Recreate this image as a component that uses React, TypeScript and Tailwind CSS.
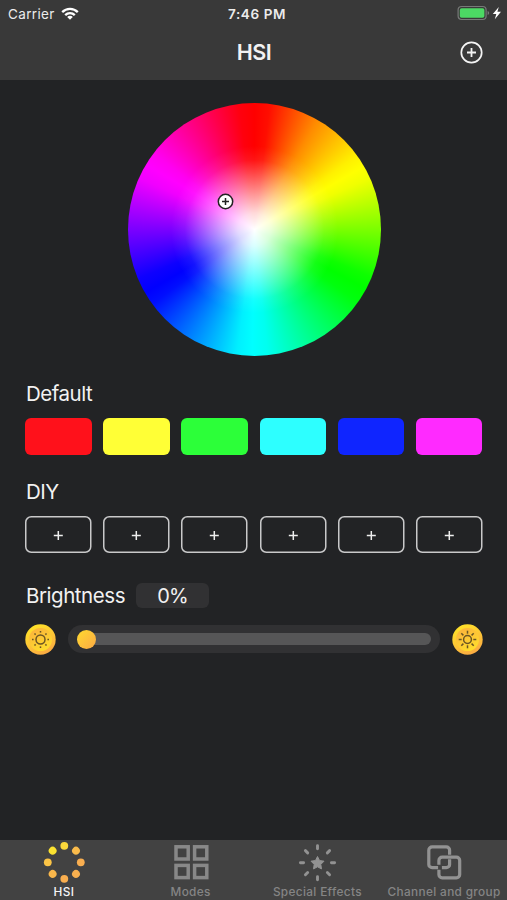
import type { ReactNode } from 'react';

const presets = ['bg-[#ff111b]', 'bg-[#ffff36]', 'bg-[#2cff39]', 'bg-[#2dffff]', 'bg-[#0f25ff]', 'bg-[#ff2aff]'];

function StatusBar() {
  return (
    <div className="grid h-[28px] grid-cols-3 items-center pl-2 pr-[5px] text-[13.5px] text-[#ececec]">
      <div className="flex items-center gap-[7px]">
        <span className="tracking-[0.35px]">Carrier</span>
        <svg className="mb-[2px] -ml-px" width="18" height="13" viewBox="0 0 18 13" fill="none" stroke="#fff" strokeWidth="2.3">
          <path d="M1.2 5.1C5.6.7 12.4.7 16.8 5.1" />
          <path d="M4.2 8.1c2.7-2.7 6.9-2.7 9.6 0" />
          <path d="M9 12.7 6.2 9.9c1.6-1.5 4-1.5 5.6 0z" fill="#fff" stroke="none" />
        </svg>
      </div>
      <span className="pl-[4px] text-center text-[13.5px] font-semibold tracking-[0.6px] whitespace-nowrap">7:46 PM</span>
      <div className="flex items-center justify-end pb-[2px]">
        <svg width="45" height="16" viewBox="0 0 45 16">
          <rect x="1.1" y="1.5" width="28" height="13" rx="3.5" fill="none" stroke="#777a78" strokeWidth="1.2" />
          <rect x="2.8" y="3.2" width="24.6" height="9.6" rx="1.8" fill="#4cd964" />
          <path d="M30.6 6v4q1.6-.6 1.6-2t-1.6-2z" fill="#777a78" />
          <path d="M41.8 2 35.8 9h3.5l-1.5 5.2 6.2-7.4h-3.6z" fill="#fff" />
        </svg>
      </div>
    </div>
  );
}

function Header() {
  return (
    <header className="h-[79.5px] shrink-0 bg-[#393939]">
      <StatusBar />
      <div className="grid h-[48px] grid-cols-3 items-center px-[23.5px]">
        <span />
        <h1 className="pl-[1px] text-center text-[21.5px] font-semibold tracking-[-0.5px]">HSI</h1>
        <svg className="justify-self-end" width="23" height="23" viewBox="0 0 23 23" fill="none" stroke="#f4f4f4">
          <circle cx="11.5" cy="11.5" r="10.2" strokeWidth="1.7" />
          <path d="M11.5 7v9M7 11.5h9" strokeWidth="1.8" />
        </svg>
      </div>
    </header>
  );
}

function ColorWheel() {
  return (
    <div className="relative mt-[23.5px] ml-[127.5px] size-[253px] rounded-full bg-[radial-gradient(circle_closest-side,#fff_0%,#ffffffd9_13%,#ffffff99_27%,#ffffff4d_43%,#ffffff14_55%,#fff0_66%),conic-gradient(#f00_0deg,#ff0e00_7deg,#ff8c00_30deg,#fff000_54deg,#ff0_60deg,#f0ff00_66deg,#80ff00_89deg,#0eff00_112deg,#0f0_118deg,#00ff0e_125deg,#00ff80_150deg,#00fff0_174deg,#0ff_181deg,#00f0ff_188deg,#0080ff_211deg,#000eff_234deg,#00f_240deg,#0e00ff_247deg,#8000ff_271deg,#f000ff_294deg,#f0f_301deg,#ff00f0_307deg,#ff0080_330deg,#ff000e_353deg,#f00_360deg)]">
      <svg className="absolute top-[90px] left-[89px]" width="17" height="17" viewBox="0 0 17 17">
        <circle cx="8.5" cy="8.5" r="7.2" fill="#fff" stroke="#222" strokeWidth="1.5" />
        <path d="M8.5 5v7M5 8.5h7" stroke="#222" strokeWidth="1.5" />
      </svg>
    </div>
  );
}

function DiySlot() {
  return (
    <svg className="h-[37px] w-full overflow-visible" viewBox="0 0 66.5 37" fill="none">
      <rect x="0.75" y="0.75" width="65" height="35.5" rx="5.5" stroke="#c9c9ca" strokeWidth="1.5" />
      <path d="M33.3 15v9M28.8 19.5h9" stroke="#eee" strokeWidth="1.5" />
    </svg>
  );
}

function SunBadge({ id, bright }: { id: string; bright?: boolean }) {
  const rays = [0, 45, 90, 135, 180, 225, 270, 315];
  return (
    <svg className="shrink-0" width="31" height="31" viewBox="0 0 31 31">
      <defs>
        <linearGradient id={id} x1="0.2" y1="0" x2="0.7" y2="1">
          <stop offset="0" stopColor="#ffe527" />
          <stop offset="1" stopColor="#fba943" />
        </linearGradient>
        <linearGradient id={`${id}-inner`} x1="0.7" y1="1" x2="0.2" y2="0">
          <stop offset="0" stopColor="#ffde2c" />
          <stop offset="1" stopColor="#fbb23d" />
        </linearGradient>
      </defs>
      <circle cx="15.5" cy="15.5" r="15.2" fill={`url(#${id})`} />
      <circle cx="15.5" cy="15.5" r="11.5" fill={`url(#${id}-inner)`} />
      <g stroke="#6b5524" fill="none">
        <circle cx="15.5" cy="15.5" r={bright ? 3.9 : 4.5} strokeWidth="1.5" />
        {rays.map((angle) => (
          <path
            key={angle}
            d={bright ? 'M15.5 6.7v3' : 'M15.5 7v1.6'}
            strokeWidth="1.5"
            transform={`rotate(${angle} 15.5 15.5)`}
          />
        ))}
      </g>
    </svg>
  );
}

function Brightness() {
  return (
    <section>
      <div className="mt-[30px] flex h-[25px] items-center gap-[10px] pl-px">
        <h2 className="w-[100px] pt-[2px] text-[20.5px] leading-none tracking-[-0.45px] whitespace-nowrap">Brightness</h2>
        <div className="flex h-[25px] w-[73px] items-center justify-center rounded-md bg-[#313133] pt-[2px] text-[20px] tracking-[-1px]">0%</div>
      </div>
      <div className="mt-[16px] flex items-center">
        <SunBadge id="sun-low" />
        <div className="mx-[12px] flex h-[28px] flex-1 items-center rounded-full bg-[#313133] px-[8.5px]">
          <div className="flex h-[11.5px] w-full items-center rounded-full bg-[#565657]">
            <div className="size-[19px] shrink-0 rounded-full bg-linear-to-br from-[#ffda2c] to-[#fba943]" />
          </div>
        </div>
        <SunBadge id="sun-high" bright />
      </div>
    </section>
  );
}

function HsiIcon() {
  const dots = ['#fbd83b', '#fabb4b', '#f9ae50', '#f9b04f', '#f9ae4f', '#fab74b', '#fbc446', '#fbe231'];
  return (
    <svg width="42" height="42" viewBox="0 0 42 42">
      {dots.map((fill, i) => (
        <circle key={fill + i} cx="21.3" cy="4.8" r="3.9" fill={fill} transform={`rotate(${i * 45} 21.3 21.3)`} />
      ))}
    </svg>
  );
}

function ModesIcon() {
  return (
    <svg width="42" height="42" viewBox="0 0 42 42" fill="none" stroke="#888" strokeWidth="3.5">
      <rect x="6" y="5.8" width="12.2" height="12.2" />
      <rect x="24.6" y="5.8" width="12.2" height="12.2" />
      <rect x="6" y="24.4" width="12.2" height="12.2" />
      <rect x="24.6" y="24.4" width="12.2" height="12.2" />
    </svg>
  );
}

function EffectsIcon() {
  return (
    <svg width="42" height="42" viewBox="0 0 42 42">
      {[0, 45, 90, 135, 180, 225, 270, 315].map((angle) => (
        <path
          key={angle}
          d="M21.5 4.6v3.2"
          stroke="#929292"
          strokeWidth="2.9"
          strokeLinecap="round"
          transform={`rotate(${angle} 21.5 21.7)`}
        />
      ))}
      <path
        d="m21.5 15.5 2 4 4.5.7-3.2 3.2.7 4.5-4-2.1-4 2.1.7-4.5-3.2-3.2 4.5-.7z"
        fill="#929292"
        stroke="#929292"
        strokeLinejoin="round"
      />
    </svg>
  );
}

function ChannelIcon() {
  return (
    <svg width="42" height="42" viewBox="-1.2 0 42 42" fill="none" stroke="#929292" strokeWidth="3.2">
      <path d="M13.9 26.7H7.9a3.3 3.3 0 0 1-3.3-3.3V9.2a3.3 3.3 0 0 1 3.3-3.3h14.2A3.3 3.3 0 0 1 25.4 9.2v4.5" />
      <path d="M14.7 23.7V19.4a3.3 3.3 0 0 1 3.3-3.3h14.2a3.3 3.3 0 0 1 3.3 3.3v14.2a3.3 3.3 0 0 1-3.3 3.3H18a3.3 3.3 0 0 1-3.3-3.3V28.7" />
      <path d="M25.4 18.2v5.2a3.3 3.3 0 0 1-3.3 3.3H17.7" />
    </svg>
  );
}

function Tab({ label, active, children }: { label: ReactNode; active?: boolean; children: ReactNode }) {
  return (
    <div className={`flex min-w-0 flex-col items-center pt-[1px] pl-[1px] ${active ? 'text-[#f5f5f5]' : 'text-[#858585]'}`}>
      {children}
      <span className="pt-px text-[11.8px] leading-[17px] font-medium tracking-[0.35px] whitespace-nowrap">{label}</span>
    </div>
  );
}

export default function App() {
  return (
    <div className="flex h-[900px] w-[507px] flex-col overflow-hidden bg-[#222325] font-['Inter','Liberation_Sans',sans-serif] text-[#f2f2f2]">
      <Header />
      <main className="flex-1">
        <ColorWheel />
        <div className="pt-[24.5px] pr-[24.5px] pl-[25px]">
          <h2 className="pl-px text-[20.5px] leading-[26px] tracking-[-0.5px]">Default</h2>
          <div className="mt-[11px] grid grid-cols-6 gap-[11.7px]">
            {presets.map((color) => (
              <div key={color} className={`h-[37px] rounded-md ${color}`} />
            ))}
          </div>
          <h2 className="mt-[24px] pl-px text-[20.5px] leading-[26px] tracking-[-0.5px]">DIY</h2>
          <div className="mt-[11px] grid grid-cols-6 gap-[11.7px]">
            {presets.map((color) => (
              <DiySlot key={color} />
            ))}
          </div>
          <Brightness />
        </div>
      </main>
      <nav className="grid h-[60px] shrink-0 grid-cols-4 bg-[#424242]">
        <Tab label="HSI" active>
          <HsiIcon />
        </Tab>
        <Tab label="Modes">
          <ModesIcon />
        </Tab>
        <Tab label="Special Effects">
          <EffectsIcon />
        </Tab>
        <Tab label="Channel and group">
          <ChannelIcon />
        </Tab>
      </nav>
    </div>
  );
}
